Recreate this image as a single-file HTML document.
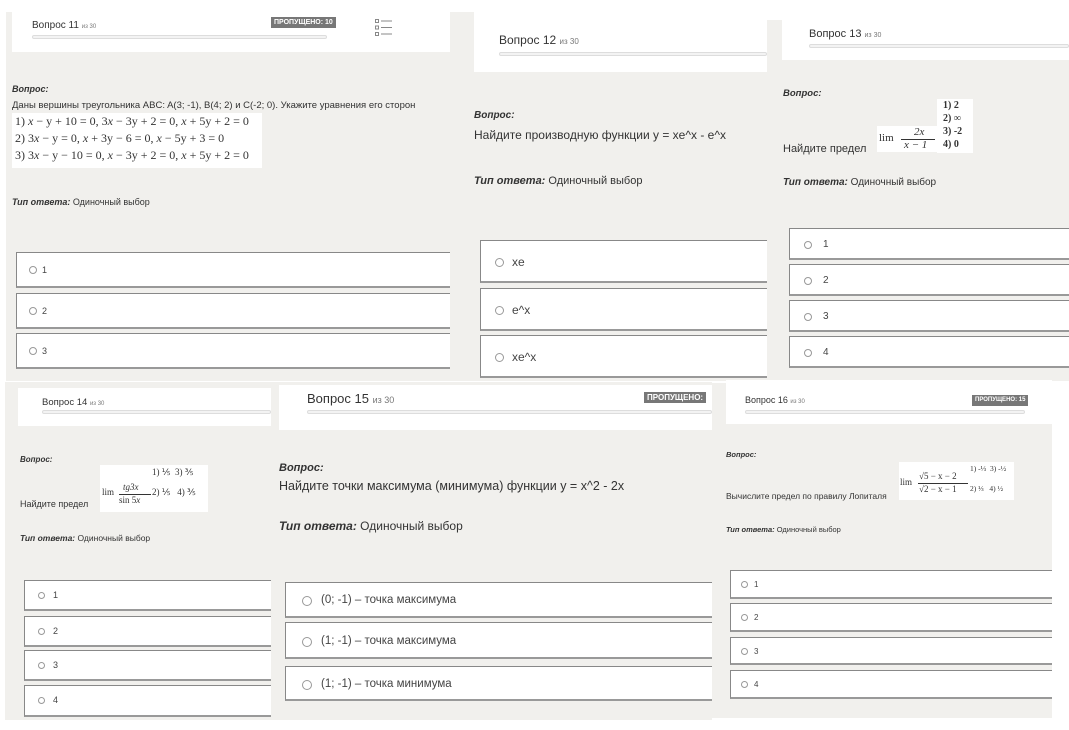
<!DOCTYPE html>
<html><head><meta charset="utf-8"><style>
*{margin:0;padding:0;box-sizing:border-box}
body{width:1069px;height:730px;background:#fff;position:relative;overflow:hidden;font-family:"Liberation Sans","DejaVu Sans",sans-serif;color:#333}
.a{position:absolute}
.g{background:#f1f0ed}
.w{background:#fff}
.bar{position:absolute;height:4px;border:1px solid #ddd;border-radius:2px;background:#f3f3f3}
.badge{position:absolute;background:#777;color:#fff;font-weight:bold;font-size:7px;padding:1px 3px;line-height:9px}
.opt{position:absolute;background:#fff;border:1px solid #888;border-right:none;border-bottom:2px solid #999;color:#444}
.opt span{position:absolute;border:1px solid #999;border-radius:50%}
.q{font-style:italic;font-weight:bold;color:#333}
.m{font-family:"Liberation Serif",serif;background:#fff;position:absolute}
</style></head><body>

<!-- Panel 11 -->
<div class="a g" style="left:6px;top:12px;width:468px;height:369px"></div>
<div class="a w" style="left:12px;top:0;width:438px;height:52px"></div>
<div class="a w" style="left:0;top:0;width:474px;height:12px"></div>
<div class="a" style="left:32px;top:20px;font-size:10px">Вопрос 11 <span style="font-size:6px;color:#777">из 30</span></div>
<div class="bar" style="left:32px;top:35px;width:295px"></div>
<div class="badge" style="left:271px;top:17px">ПРОПУЩЕНО: 10</div>
<svg class="a" style="left:374px;top:18px" width="20" height="20"><g fill="none" stroke="#888" stroke-width="1"><rect x="1.5" y="1.5" width="3" height="3"/><rect x="1.5" y="8" width="3" height="3"/><rect x="1.5" y="14.5" width="3" height="3"/><path d="M7 3h11M7 9.5h11M7 16h11"/></g></svg>
<div class="a q" style="left:12px;top:84px;font-size:9px">Вопрос:</div>
<div class="a" style="left:12px;top:100px;font-size:9.5px">Даны вершины треугольника ABC: A(3; -1), B(4; 2) и C(-2; 0). Укажите уравнения его сторон</div>
<div class="m" style="left:12px;top:113px;width:250px;height:55px;font-size:12px;line-height:17px;padding-left:3px">1) <i>x</i> − y + 10 = 0, 3<i>x</i> − 3y + 2 = 0, <i>x</i> + 5y + 2 = 0<br>2) 3<i>x</i> − y = 0, <i>x</i> + 3y − 6 = 0, <i>x</i> − 5y + 3 = 0<br>3) 3<i>x</i> − y − 10 = 0, <i>x</i> − 3y + 2 = 0, <i>x</i> + 5y + 2 = 0</div>
<div class="a" style="left:12px;top:197px;font-size:9px"><span class="q">Тип ответа:</span> Одиночный выбор</div>
<div class="opt" style="left:16px;top:252px;width:434px;height:36px;font-size:9px"><span style="left:12px;top:13px;width:8px;height:8px"></span><b style="font-weight:normal;position:absolute;left:25px;top:12px">1</b></div>
<div class="opt" style="left:16px;top:293px;width:434px;height:36px;font-size:9px"><span style="left:12px;top:13px;width:8px;height:8px"></span><b style="font-weight:normal;position:absolute;left:25px;top:12px">2</b></div>
<div class="opt" style="left:16px;top:333px;width:434px;height:36px;font-size:9px"><span style="left:12px;top:13px;width:8px;height:8px"></span><b style="font-weight:normal;position:absolute;left:25px;top:12px">3</b></div>

<!-- Panel 12 -->
<div class="a g" style="left:474px;top:16px;width:293px;height:365px"></div>
<div class="a w" style="left:474px;top:0;width:293px;height:72px"></div>
<div class="a" style="left:499px;top:33px;font-size:12px">Вопрос 12 <span style="font-size:8px;color:#777">из 30</span></div>
<div class="bar" style="left:499px;top:52px;width:268px"></div>
<div class="a q" style="left:474px;top:110px;font-size:10px">Вопрос:</div>
<div class="a" style="left:474px;top:128px;font-size:12px">Найдите производную функции y = xe^x - e^x</div>
<div class="a" style="left:474px;top:175px;font-size:11px"><span class="q">Тип ответа:</span> Одиночный выбор</div>
<div class="opt" style="left:480px;top:240px;width:287px;height:43px;font-size:12px"><span style="left:14px;top:17px;width:9px;height:9px"></span><b style="font-weight:normal;position:absolute;left:31px;top:14px">xe</b></div>
<div class="opt" style="left:480px;top:288px;width:287px;height:43px;font-size:12px"><span style="left:14px;top:17px;width:9px;height:9px"></span><b style="font-weight:normal;position:absolute;left:31px;top:14px">e^x</b></div>
<div class="opt" style="left:480px;top:335px;width:287px;height:43px;font-size:12px"><span style="left:14px;top:17px;width:9px;height:9px"></span><b style="font-weight:normal;position:absolute;left:31px;top:14px">xe^x</b></div>

<!-- Panel 13 -->
<div class="a g" style="left:767px;top:20px;width:302px;height:361px"></div>
<div class="a w" style="left:782px;top:20px;width:287px;height:40px"></div>
<div class="a" style="left:809px;top:28px;font-size:11px">Вопрос 13 <span style="font-size:7px;color:#777">из 30</span></div>
<div class="bar" style="left:809px;top:44px;width:260px"></div>
<div class="a q" style="left:783px;top:88px;font-size:9.5px">Вопрос:</div>
<div class="a" style="left:783px;top:143px;font-size:11px">Найдите предел</div>
<div class="m" style="left:877px;top:126px;width:60px;height:26px;font-size:11px"><span style="position:absolute;left:2px;top:6px">lim</span><span style="position:absolute;left:37px;top:0;font-style:italic">2x</span><span style="position:absolute;left:24px;top:13px;width:34px;border-top:1px solid #333"></span><span style="position:absolute;left:27px;top:13px;font-style:italic">x − 1</span></div>
<div class="m" style="left:937px;top:99px;width:36px;height:54px;font-size:10px;line-height:13px;font-weight:bold;padding-left:6px">1) 2<br>2) ∞<br>3) -2<br>4) 0</div>
<div class="a" style="left:783px;top:177px;font-size:10px"><span class="q">Тип ответа:</span> Одиночный выбор</div>
<div class="opt" style="left:789px;top:228px;width:280px;height:32px;font-size:10px"><span style="left:14px;top:12px;width:8px;height:8px"></span><b style="font-weight:normal;position:absolute;left:33px;top:10px">1</b></div>
<div class="opt" style="left:789px;top:264px;width:280px;height:32px;font-size:10px"><span style="left:14px;top:12px;width:8px;height:8px"></span><b style="font-weight:normal;position:absolute;left:33px;top:10px">2</b></div>
<div class="opt" style="left:789px;top:300px;width:280px;height:32px;font-size:10px"><span style="left:14px;top:12px;width:8px;height:8px"></span><b style="font-weight:normal;position:absolute;left:33px;top:10px">3</b></div>
<div class="opt" style="left:789px;top:336px;width:280px;height:32px;font-size:10px"><span style="left:14px;top:12px;width:8px;height:8px"></span><b style="font-weight:normal;position:absolute;left:33px;top:10px">4</b></div>

<!-- Panel 14 -->
<div class="a g" style="left:5px;top:382px;width:266px;height:338px"></div>
<div class="a w" style="left:18px;top:388px;width:253px;height:38px"></div>
<div class="a" style="left:42px;top:397px;font-size:9.5px">Вопрос 14 <span style="font-size:6px;color:#777">из 30</span></div>
<div class="bar" style="left:42px;top:410px;width:229px"></div>
<div class="a q" style="left:20px;top:455px;font-size:8px">Вопрос:</div>
<div class="a" style="left:20px;top:499px;font-size:9px">Найдите предел</div>
<div class="m" style="left:100px;top:465px;width:108px;height:47px;font-size:9px"><span style="position:absolute;left:2px;top:22px">lim</span><span style="position:absolute;left:23px;top:17px;font-style:italic">tg3x</span><span style="position:absolute;left:19px;top:29px;width:32px;border-top:1px solid #333"></span><span style="position:absolute;left:19px;top:30px">sin 5<i>x</i></span><span style="position:absolute;left:52px;top:2px">1) ⅕ &nbsp;3) ⅗</span><span style="position:absolute;left:52px;top:22px">2) ⅕ &nbsp; 4) ⅗</span></div>
<div class="a" style="left:20px;top:533px;font-size:8.5px"><span class="q">Тип ответа:</span> Одиночный выбор</div>
<div class="opt" style="left:24px;top:580px;width:247px;height:31px;font-size:9px"><span style="left:13px;top:11px;width:7px;height:7px"></span><b style="font-weight:normal;position:absolute;left:28px;top:9px">1</b></div>
<div class="opt" style="left:24px;top:616px;width:247px;height:31px;font-size:9px"><span style="left:13px;top:11px;width:7px;height:7px"></span><b style="font-weight:normal;position:absolute;left:28px;top:9px">2</b></div>
<div class="opt" style="left:24px;top:650px;width:247px;height:31px;font-size:9px"><span style="left:13px;top:11px;width:7px;height:7px"></span><b style="font-weight:normal;position:absolute;left:28px;top:9px">3</b></div>
<div class="opt" style="left:24px;top:685px;width:247px;height:32px;font-size:9px"><span style="left:13px;top:11px;width:7px;height:7px"></span><b style="font-weight:normal;position:absolute;left:28px;top:9px">4</b></div>

<!-- Panel 15 -->
<div class="a g" style="left:271px;top:382px;width:441px;height:338px"></div>
<div class="a w" style="left:279px;top:385px;width:433px;height:45px"></div>
<div class="a" style="left:307px;top:391px;font-size:13px">Вопрос 15 <span style="font-size:9px;color:#777">из 30</span></div>
<div class="bar" style="left:307px;top:410px;width:405px"></div>
<div class="badge" style="left:644px;top:392px;font-size:8px;padding:1px 3px">ПРОПУЩЕНО:</div>
<div class="a q" style="left:279px;top:462px;font-size:11px">Вопрос:</div>
<div class="a" style="left:279px;top:479px;font-size:12.5px">Найдите точки максимума (минимума) функции y = x^2 - 2x</div>
<div class="a" style="left:279px;top:519px;font-size:12px"><span class="q">Тип ответа:</span> Одиночный выбор</div>
<div class="opt" style="left:285px;top:582px;width:427px;height:36px;font-size:11.5px"><span style="left:16px;top:13px;width:10px;height:10px"></span><b style="font-weight:normal;position:absolute;left:35px;top:11px">(0; -1) – точка максимума</b></div>
<div class="opt" style="left:285px;top:622px;width:427px;height:37px;font-size:11.5px"><span style="left:16px;top:14px;width:10px;height:10px"></span><b style="font-weight:normal;position:absolute;left:35px;top:12px">(1; -1) – точка максимума</b></div>
<div class="opt" style="left:285px;top:666px;width:427px;height:35px;font-size:11.5px"><span style="left:16px;top:13px;width:10px;height:10px"></span><b style="font-weight:normal;position:absolute;left:35px;top:11px">(1; -1) – точка минимума</b></div>

<!-- Panel 16 -->
<div class="a g" style="left:712px;top:383px;width:340px;height:335px"></div>
<div class="a w" style="left:726px;top:380px;width:326px;height:44px"></div>
<div class="a" style="left:745px;top:395px;font-size:9px">Вопрос 16 <span style="font-size:6px;color:#777">из 30</span></div>
<div class="bar" style="left:745px;top:410px;width:280px"></div>
<div class="badge" style="left:972px;top:395px;font-size:6px">ПРОПУЩЕНО: 15</div>
<div class="a q" style="left:726px;top:450px;font-size:7.5px">Вопрос:</div>
<div class="a" style="left:726px;top:491px;font-size:8.5px">Вычислите предел по правилу Лопиталя</div>
<div class="m" style="left:899px;top:462px;width:115px;height:38px;font-size:9px"><span style="position:absolute;left:1px;top:15px">lim</span><span style="position:absolute;left:20px;top:9px">√5 − x − 2</span><span style="position:absolute;left:19px;top:21px;width:50px;border-top:1px solid #333"></span><span style="position:absolute;left:20px;top:22px">√2 − x − 1</span><span style="position:absolute;left:71px;top:2px;font-size:7.5px">1) -⅓ &nbsp;3) -½</span><span style="position:absolute;left:71px;top:22px;font-size:7.5px">2) ⅓ &nbsp; 4) ½</span></div>
<div class="a" style="left:726px;top:525px;font-size:7.5px"><span class="q">Тип ответа:</span> Одиночный выбор</div>
<div class="opt" style="left:730px;top:570px;width:322px;height:29px;font-size:8px"><span style="left:10px;top:10px;width:7px;height:7px"></span><b style="font-weight:normal;position:absolute;left:23px;top:9px">1</b></div>
<div class="opt" style="left:730px;top:603px;width:322px;height:29px;font-size:8px"><span style="left:10px;top:10px;width:7px;height:7px"></span><b style="font-weight:normal;position:absolute;left:23px;top:9px">2</b></div>
<div class="opt" style="left:730px;top:637px;width:322px;height:28px;font-size:8px"><span style="left:10px;top:10px;width:7px;height:7px"></span><b style="font-weight:normal;position:absolute;left:23px;top:9px">3</b></div>
<div class="opt" style="left:730px;top:670px;width:322px;height:29px;font-size:8px"><span style="left:10px;top:10px;width:7px;height:7px"></span><b style="font-weight:normal;position:absolute;left:23px;top:9px">4</b></div>

</body></html>
